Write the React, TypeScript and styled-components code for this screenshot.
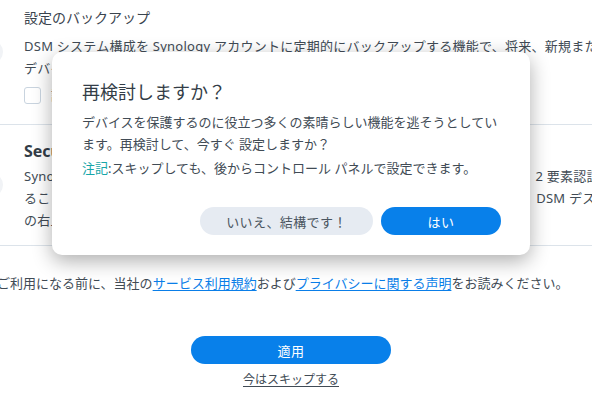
import styled, { createGlobalStyle } from 'styled-components';

const GlobalStyle = createGlobalStyle`
  html, body {
    margin: 0;
    padding: 0;
    background: #fff;
  }
  body {
    width: 592px;
    height: 407px;
    overflow: hidden;
    font-family: "Noto Sans", "Noto Sans CJK JP", sans-serif;
    color: #414b55;
  }
`;

const Page = styled.div`
  position: relative;
  width: 592px;
  height: 407px;
  overflow: hidden;
`;

const Section = styled.section<{ $pt: number; $pb: number }>`
  display: flex;
  align-items: flex-start;
  gap: 21px;
  padding: ${(p) => p.$pt}px 0 ${(p) => p.$pb}px 0;
  border-bottom: 1px solid #dce3ea;
`;

const SideIcon = styled.div<{ $top: number }>`
  flex: none;
  width: 24px;
  height: 24px;
  margin-left: -21px;
  margin-top: ${(p) => p.$top}px;
  border-radius: 50%;
  background: #f1f3f6;
`;

const Content = styled.div`
  flex: 1;
  min-width: 0;
`;

const SectionTitle = styled.div`
  font-size: 14px;
  line-height: 20px;
  color: #3a444e;
`;

const HeadTitle = styled.div`
  font-size: 16px;
  line-height: 22px;
  font-weight: 700;
  color: #333d47;
`;

const Text = styled.p<{ $mt: number }>`
  margin: ${(p) => p.$mt}px 0 0;
  font-size: 13px;
  line-height: 22px;
  letter-spacing: 0.25px;
  white-space: nowrap;
`;

const CheckRow = styled.label`
  display: flex;
  align-items: center;
  gap: 10px;
  margin-top: 8px;
  font-size: 13px;
  line-height: 17px;
`;

const Checkbox = styled.span`
  width: 17px;
  height: 17px;
  box-sizing: border-box;
  border: 1px solid #c9d4df;
  border-radius: 3px;
  background: #fff;
`;

const Legal = styled.p`
  margin: 26px 0 0 -3px;
  font-size: 13px;
  line-height: 22px;
  white-space: nowrap;
`;

const Link = styled.a`
  color: #0a7ee8;
  text-decoration: underline;
  text-underline-offset: 2px;
`;

const Footer = styled.div`
  display: flex;
  flex-direction: column;
  align-items: center;
  margin: 42px 0 0 -10px;
`;

const Pill = styled.button<{ $primary?: boolean; $w: number }>`
  width: ${(p) => p.$w}px;
  height: 28px;
  border: 0;
  border-radius: 14px;
  padding: 0;
  font-family: inherit;
  font-size: 13px;
  letter-spacing: 0.4px;
  background: ${(p) => (p.$primary ? '#0880ea' : '#e6ebf2')};
  color: ${(p) => (p.$primary ? '#fff' : '#4a5560')};
  cursor: pointer;
`;

const SkipLink = styled.a`
  margin-top: 6px;
  font-size: 12px;
  line-height: 20px;
  color: #414b55;
  text-decoration: underline;
  text-underline-offset: 2px;
`;

const Modal = styled.div`
  position: absolute;
  left: 52px;
  top: 52px;
  width: 478px;
  box-sizing: border-box;
  padding: 27px 29px 20px 30px;
  background: #fff;
  border-radius: 10px;
  box-shadow: 0 6px 20px rgba(0, 0, 0, 0.32);
`;

const ModalTitle = styled.h2`
  margin: 0;
  font-size: 18px;
  line-height: 26px;
  font-weight: 400;
  color: #333d47;
`;

const ModalText = styled.p<{ $mt: number }>`
  margin: ${(p) => p.$mt}px 0 0;
  font-size: 13px;
  line-height: 22px;
  color: #414b55;
`;

const Note = styled.span`
  color: #17a6a8;
`;

const Actions = styled.div`
  display: flex;
  justify-content: flex-end;
  gap: 8px;
  margin-top: 28px;
`;

export default function App() {
  return (
    <Page>
      <GlobalStyle />
      <Section $pt={8} $pb={20}>
        <SideIcon $top={32} />
        <Content>
          <SectionTitle>設定のバックアップ</SectionTitle>
          <Text $mt={7}>
            DSM システム構成を Synology アカウントに定期的にバックアップする機能で、将来、新規または交換したデバイスに設定を復元できます。
            <br />
            デバイスを交換するときに簡単に復元できます。
          </Text>
          <CheckRow>
            <Checkbox />
            <span>設定のバックアップを有効にする</span>
          </CheckRow>
        </Content>
      </Section>
      <Section $pt={15} $pb={14}>
        <SideIcon $top={33} />
        <Content>
          <HeadTitle>Secure SignIn</HeadTitle>
          <Text $mt={3}>
            Synology Secure SignIn は、ワンタップでサインインを承認できる便利な機能です。{'\u00a0'}2 要素認証を有効にす
            <br />
            ることもできます。この機能の設定が完了した後は、いつでも、必要に応じて簡単に{'\u00a0\u00a0'} DSM デスクトップ
            <br />
            の右上にある個人設定から変更できます。
          </Text>
        </Content>
      </Section>
      <Legal>
        ご利用になる前に、当社の<Link href="#">サービス利用規約</Link>および
        <Link href="#">プライバシーに関する声明</Link>をお読みください。
      </Legal>
      <Footer>
        <Pill $primary $w={200}>適用</Pill>
        <SkipLink href="#">今はスキップする</SkipLink>
      </Footer>
      <Modal>
        <ModalTitle>再検討しますか？</ModalTitle>
        <ModalText $mt={6}>
          デバイスを保護するのに役立つ多くの素晴らしい機能を逃そうとしています。再検討して、今すぐ 設定しますか？
        </ModalText>
        <ModalText $mt={2}>
          <Note>注記</Note>:スキップしても、後からコントロール パネルで設定できます。
        </ModalText>
        <Actions>
          <Pill $w={173}>いいえ、結構です！</Pill>
          <Pill $primary $w={120}>はい</Pill>
        </Actions>
      </Modal>
    </Page>
  );
}
